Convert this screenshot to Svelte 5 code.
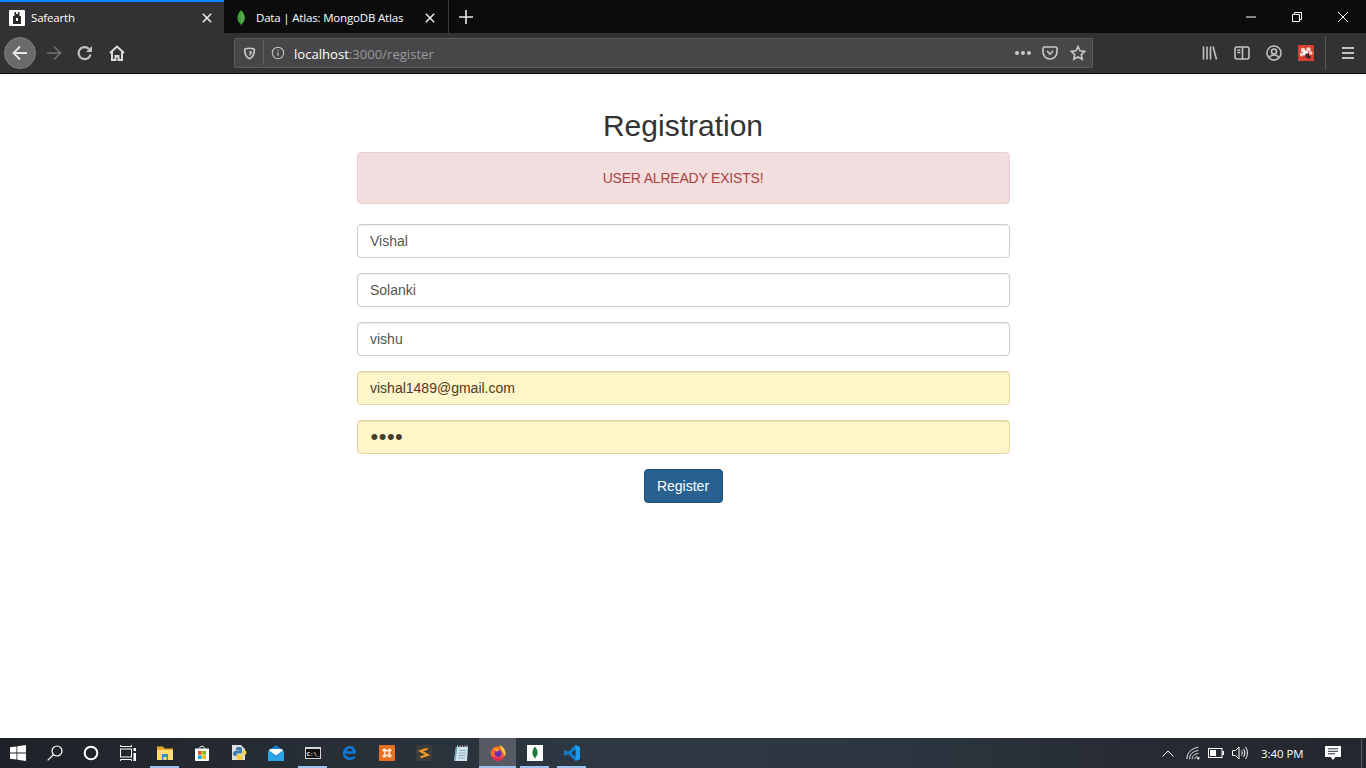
<script>
	let fields = [
		{ value: 'Vishal', type: 'text' },
		{ value: 'Solanki', type: 'text' },
		{ value: 'vishu', type: 'text' },
		{ value: 'vishal1489@gmail.com', type: 'text', filled: true },
		{ value: 'abcd', type: 'password', filled: true }
	];
</script>

<div class="screen">
	<!-- Tabs -->
	<header class="tabstrip">
		<div class="tab active">
			<svg class="favicon" viewBox="0 0 16 16">
				<rect width="16" height="16" rx="1" fill="#fff" />
				<path d="M5.500 2h1.500v2h2V2h1.500v4h1.500v8H4V6h1.500z" fill="#2a2a2a" />
				<rect x="7" y="8" width="2" height="3" fill="#fff" />
			</svg>
			<span class="tab-title">Safearth</span>
			<svg class="tab-close" viewBox="0 0 12 12"><path d="M1 1l10 10M11 1L1 11" /></svg>
		</div>
		<div class="tab">
			<svg class="favicon" viewBox="0 0 16 16">
				<path d="M8 0c2 2.400 3.600 4.800 3.600 8 0 3-1.700 5-3.100 6l-.5 2-.5-2C6.100 13 4.400 11 4.400 8 4.400 4.800 6 2.400 8 0z" fill="#3fa037" />
				<path d="M8 1v15c.4-.8.2-1.400.5-2 1.400-1 3.100-3 3.100-6C11.600 4.800 10 2.400 8 1z" fill="#58aa50" />
			</svg>
			<span class="tab-title">Data | Atlas: MongoDB Atlas</span>
			<svg class="tab-close" viewBox="0 0 12 12"><path d="M1 1l10 10M11 1L1 11" /></svg>
		</div>
		<div class="new-tab">
			<svg viewBox="0 0 14 14"><path d="M7 0v14M0 7h14" /></svg>
		</div>
		<div class="win-controls">
			<button aria-label="Minimize"><svg viewBox="0 0 10 10"><path d="M0 5h10" /></svg></button>
			<button aria-label="Restore"><svg viewBox="0 0 10 10"><path d="M.5 2.500h7v7h-7zM2.500 2.500V.5h7v7H7.500" /></svg></button>
			<button aria-label="Close"><svg viewBox="0 0 10 10"><path d="M0 0l10 10M10 0L0 10" /></svg></button>
		</div>
	</header>

	<!-- Toolbar -->
	<nav class="toolbar">
		<div class="back">
			<svg viewBox="0 0 16 16"><path d="M1 8h14M8 1.500L1.500 8 8 14.500" /></svg>
		</div>
		<div class="tool forward">
			<svg viewBox="0 0 16 16"><path d="M1 8h14M8 1.500L14.500 8 8 14.500" /></svg>
		</div>
		<div class="tool reload">
			<svg viewBox="0 0 16 16"><path d="M13.500 9.500A6 6 0 1 1 12 4" /><path class="solid" d="M15 1v6H9z" /></svg>
		</div>
		<div class="tool home">
			<svg viewBox="0 0 16 16"><path d="M1 8l7-6.500L15 8M3 6.500V15h3.500v-4h3v4H13V6.500" /></svg>
		</div>

		<div class="urlbar">
			<svg class="url-shield" viewBox="0 0 16 16">
				<path class="outline" d="M8 1.500c2 0 4 .5 6 1.300 0 6-1.800 9.700-6 11.700-4.200-2-6-5.700-6-11.700 2-.8 4-1.300 6-1.300z" />
				<path class="solid" d="M8 5c1 0 2 .2 2.800.5 0 2.600-1 4.300-2.800 5.500z" />
			</svg>
			<span class="url-sep"></span>
			<svg class="url-info" viewBox="0 0 16 16">
				<circle cx="8" cy="8" r="6.500" />
				<path d="M8 7v4.500M8 4.200v1.400" />
			</svg>
			<span class="url-text">localhost<span class="url-dim">:3000/register</span></span>
			<span class="url-dots"><i></i><i></i><i></i></span>
			<svg class="url-pocket" viewBox="0 0 16 16">
				<path d="M2.500 2h11A1.500 1.500 0 0 1 15 3.500V7a7 7 0 0 1-14 0V3.500A1.500 1.500 0 0 1 2.500 2z" />
				<path d="M5 6l3 3 3-3" />
			</svg>
			<svg class="url-star" viewBox="0 0 16 16">
				<path d="M8 1.500l2 4.300 4.700.6-3.400 3.200.9 4.700L8 12l-4.200 2.300.9-4.700L1.300 6.400 6 5.800z" />
			</svg>
		</div>

		<div class="tool-group">
			<div class="tool">
				<svg viewBox="0 0 16 16"><path d="M1.500 1.500v13M5 1.500v13M8.500 1.500v13M11 1.500l3.500 13" /></svg>
			</div>
			<div class="tool">
				<svg viewBox="0 0 16 16"><rect x="1" y="2" width="14" height="12" rx="2" /><path d="M8.500 2v12M3.300 5h3M3.300 7.500h3" /></svg>
			</div>
			<div class="tool">
				<svg viewBox="0 0 16 16"><circle cx="8" cy="8" r="7" /><circle cx="8" cy="6.500" r="2.500" /><path d="M3.500 12.500C4.500 10.500 6 10 8 10s3.500.5 4.500 2.500" /></svg>
			</div>
			<div class="tool ext">
				<svg viewBox="0 0 16 16">
					<rect width="16" height="16" fill="#d8412f" />
					<circle cx="5" cy="5" r="2.200" fill="#f6d8d3" />
					<circle cx="10.500" cy="4.500" r="2.200" fill="#f6d8d3" />
					<circle cx="3.800" cy="9.500" r="2" fill="#f6d8d3" />
					<circle cx="12.800" cy="8" r="1.800" fill="#f6d8d3" />
					<circle cx="7.500" cy="8" r="2.500" fill="#fff" />
					<path d="M7.500 8.500h3.500v2.500h1.500v2.500H9.500v-1H7.500z" fill="#3a2020" />
				</svg>
			</div>
		</div>
		<span class="tool-sep"></span>
		<div class="tool menu">
			<svg viewBox="0 0 14 14"><path d="M1 2h12M1 7h12M1 12h12" /></svg>
		</div>
	</nav>

	<!-- Page -->
	<main class="page">
		<div class="container">
			<h2>Registration</h2>
			<div class="alert">USER ALREADY EXISTS!</div>
			<form>
				{#each fields as field}
					<div class="form-group">
						<input class:filled={field.filled} class:dots={field.type === 'password'} type={field.type} value={field.value} readonly />
					</div>
				{/each}
				<div class="actions">
					<button type="button" class="btn">Register</button>
				</div>
			</form>
		</div>
	</main>

	<!-- Taskbar -->
	<footer class="taskbar">
		<div class="task w36">
			<svg viewBox="0 0 16 16"><path class="win" d="M0 2.300l6.500-.9v6.200H0zM7.300 1.300L16 0v7.600H7.300zM0 8.400h6.500v6.200L0 13.700zM7.300 8.400H16V16l-8.700-1.300z" /></svg>
		</div>
		<div class="task">
			<svg viewBox="0 0 16 16"><circle class="line" cx="10" cy="6" r="5" /><path class="line" d="M6.500 9.500L.7 15.300" /></svg>
		</div>
		<div class="task w36">
			<svg viewBox="0 0 16 16"><circle class="ring" cx="8" cy="8" r="6.300" /></svg>
		</div>
		<div class="task">
			<svg viewBox="0 0 16 16"><path class="thin" d="M.5 0v1.500h11V0M.5 16v-1.500h11V16" /><rect class="thin" x=".5" y="4" width="11" height="8" /><path class="win" d="M13.500 3H16v3h-2.500zM13.500 8H16v8h-2.500z" /></svg>
		</div>

		<div class="task on">
			<svg viewBox="0 0 16 16">
				<path d="M0 1.500h6l1.500 2H16V15H0z" fill="#e9a825" />
				<path d="M0 5h16v10H0z" fill="#ffdc74" />
				<path d="M5 9h6v6H9.500v-3h-3v3H5z" fill="#2a8fd6" />
			</svg>
		</div>
		<div class="task">
			<svg viewBox="0 0 16 16">
				<path class="thin" d="M5.500 3.500C5.500 .5 10.500 .5 10.500 3.500" />
				<path d="M1 3.500h14V15a1 1 0 0 1-1 1H2a1 1 0 0 1-1-1z" fill="#fff" />
				<rect x="4" y="6" width="3.700" height="3.700" fill="#f25022" />
				<rect x="8.300" y="6" width="3.700" height="3.700" fill="#7fba00" />
				<rect x="4" y="10.300" width="3.700" height="3.700" fill="#00a4ef" />
				<rect x="8.300" y="10.300" width="3.700" height="3.700" fill="#ffb900" />
			</svg>
		</div>
		<div class="task">
			<svg viewBox="0 0 16 16">
				<path d="M1 0h9l4 4v11H1z" fill="#dfe1e3" />
				<path d="M5 6V3.500C5 2.500 6 2 8 2s3 .5 3 1.500V7c0 1-1 1.500-2 1.500H7C6 8.500 5.500 9 5.500 10v1H4c-1.500 0-2-1-2-2.500S3 6 4 6h4V5.200H7" fill="#3f7cae" />
				<path d="M11.500 6V5h1.500c1.500 0 2.500 1 2.500 2.500S15 10 13.500 10H9.500v.8H12V13c0 1-1.500 2-3.500 2S5.500 14 5.500 13v-2c0-1 .8-1.500 1.800-1.500h2.700c1 0 1.500-.5 1.500-1.500z" fill="#f3cd4a" />
			</svg>
		</div>
		<div class="task">
			<svg viewBox="0 0 16 16">
				<path d="M0 6l8-6 8 6v10H0z" fill="#0f7fc9" />
				<path d="M1.500 6V4h13v2L8 10.500z" fill="#fff" />
				<path d="M0 6l8 5.500L16 6v10H0z" fill="#2aa6e8" />
			</svg>
		</div>
		<div class="task on">
			<svg class="cmd" viewBox="0 0 16 12">
				<rect width="16" height="12" fill="#d6d6d6" />
				<rect x="1" y="2" width="14" height="9" fill="#111" />
				<text x="1.800" y="8.800">C:\_</text>
			</svg>
		</div>
		<div class="task">
			<svg viewBox="0 0 16 16"><path d="M2.800 8.700h11.200C14.200 4 11.500 1 7.800 1 4 1 1 4.200 1 8.500c0 4.300 3 6.500 6.500 6.500 2.200 0 4.100-.7 5.500-1.700v-2.600c-1.500 1-3.100 1.600-4.700 1.600-2.700 0-4.600-1.300-5.500-3.600zM5 6.200C5.300 4.700 6.300 3.600 7.800 3.600s2.500 1.100 2.700 2.600z" fill="#0f78d4" fill-rule="evenodd" /></svg>
		</div>
		<div class="task">
			<svg viewBox="0 0 16 16">
				<rect width="16" height="16" rx="1" fill="#e8701f" />
				<path d="M5 3.500h1.500l1 1.500h1l1-1.500H11A1.500 1.500 0 0 1 12.500 5v1l-1.500 1v2l1.500 1v1a1.500 1.500 0 0 1-1.500 1.500H9.500l-1-1.500h-1l-1 1.500H5A1.500 1.500 0 0 1 3.500 11v-1L5 9V7L3.500 6V5A1.500 1.500 0 0 1 5 3.500z" fill="#fde3cd" />
				<rect x="6.500" y="6.500" width="3" height="3" fill="#e8701f" />
			</svg>
		</div>
		<div class="task">
			<svg viewBox="0 0 16 16">
				<rect width="16" height="16" rx="1" fill="#3c3c3c" />
				<path d="M11.500 3.800L4.500 6l7 4-7 2.200" stroke="#f59a23" stroke-width="2.200" />
			</svg>
		</div>
		<div class="task">
			<svg viewBox="0 0 16 16">
				<path d="M3 2h12l-1 14H1z" fill="#cfe6ee" />
				<path d="M3 2L1 16h1.500L4.500 2z" fill="#6fa9b8" />
				<path d="M6 5.500h7M5.700 8h7M5.500 10.500h7M5.200 13h7" stroke="#7f9fa8" stroke-width=".8" />
				<path d="M4.500 2V.5M7 2V.5M9.500 2V.5M12 2V.5M14 2V.5" stroke="#d8d8d8" stroke-width="1" />
			</svg>
		</div>
		<div class="task open">
			<svg viewBox="0 0 16 16">
				<circle cx="8" cy="8.500" r="7.300" fill="#ff6a2b" />
				<path d="M9.500 0c3.500 1.500 6 4.500 6 8.500 0 1-.2 2-.5 3-.5-2-1.500-4-3-5.500C11 4 10 2 9.500 0z" fill="#ffcb3d" />
				<path d="M1 10.500c1 3 4 5.300 7 5.300 3.300 0 6-2.300 6.800-5.300-2 2.500-8.500 3.500-13.800 0z" fill="#e3245a" />
				<circle cx="8.200" cy="8.500" r="3.500" fill="#6b2bb5" />
				<path d="M4 4c2-1 4-.5 5.500 1L6.500 6.800z" fill="#ffa436" />
			</svg>
		</div>
		<div class="task on">
			<svg viewBox="0 0 16 16">
				<rect width="16" height="16" fill="#fff" />
				<path d="M8 1.500c1.600 2 2.600 4 2.600 6.300 0 2.300-1.200 4-2.200 4.900L8 14.500l-.4-1.800c-1-.9-2.200-2.600-2.200-4.900C5.400 5.500 6.400 3.500 8 1.500z" fill="#15803d" />
			</svg>
		</div>
		<div class="task on">
			<svg viewBox="0 0 16 16">
				<path d="M11.500 0L16 2v12l-4.500 2L4 9l-2.500 2L0 10V6l1.500-1L4 7z" fill="#0e7ccb" />
				<path d="M11.500 0L16 2v12l-4.500 2z" fill="#1f9cf0" />
				<path d="M11.500 4.500L7.500 8l4 3.500z" fill="#2c2f36" />
			</svg>
		</div>

		<div class="tray">
			<svg class="t-chevron" viewBox="0 0 12 7"><path d="M.5 6.500L6 1l5.500 5.500" /></svg>
			<svg class="t-wifi" viewBox="0 0 16 16"><path d="M1 15C1 8 6 2.500 14 1.500M4 15c0-5 3.500-9 10-10M7 15c0-3 2-5.500 7-6.500M10 15c0-1.500 1-2.500 3-3" /><circle class="dot" cx="14" cy="14" r="1.400" /></svg>
			<svg class="t-battery" viewBox="0 0 16 10"><rect x=".5" y=".5" width="13.500" height="9" /><rect class="dot" x="2" y="2" width="6" height="6" /><rect class="dot" x="14.500" y="3" width="1.500" height="4" /></svg>
			<svg class="t-volume" viewBox="0 0 16 16"><path d="M.5 5.500h3L7 2v12l-3.500-3.500h-3zM9.500 5.500c1 1.500 1 3.500 0 5M11.500 4c1.700 2.500 1.700 5.500 0 8M13.500 2c2.500 3.500 2.500 8.500 0 12" /></svg>
			<span class="clock">3:40 PM</span>
			<svg class="t-note" viewBox="0 0 16 16"><path class="dot" d="M0 1h16v11h-5.500L8 15l-2.500-3H0z" /><path class="gap" d="M3 3.800h10M3 6.300h10M3 8.800h7" /></svg>
			<span class="show-desktop"></span>
		</div>
	</footer>
</div>

<style>
	:global(body) {
		margin: 0;
		background: #fff;
	}
	.screen {
		width: 1366px;
		height: 768px;
		display: flex;
		flex-direction: column;
		overflow: hidden;
		font-family: "Open Sans", "Noto Sans", sans-serif;
	}
	svg {
		display: block;
		fill: none;
	}

	/* Tabs */
	.tabstrip {
		height: 33px;
		flex: none;
		display: flex;
		background: #0c0c0d;
	}
	.tab {
		width: 225px;
		box-sizing: border-box;
		display: flex;
		align-items: center;
		padding: 2px 10px 0 9px;
		color: #fff;
	}
	.tab + .tab {
		border-right: 1px solid #3a3a3c;
		height: 33px;
	}
	.tab.active {
		width: 224px;
		background: #323234;
		border-top: 2px solid #0a84ff;
		padding-top: 0;
	}
	.favicon {
		width: 16px;
		height: 16px;
		margin-right: 6px;
		flex: none;
	}
	.tab + .tab .favicon {
		margin-right: 7px;
	}
	.tab-title {
		flex: 1;
		font-size: 11.5px;
		letter-spacing: -0.18px;
		white-space: nowrap;
	}
	.tab-close {
		width: 10px;
		height: 10px;
		margin-right: 2px;
		flex: none;
	}
	.tab + .tab .tab-close {
		margin-right: 3px;
	}
	.tab-close path {
		stroke: #f0f0f0;
		stroke-width: 1.8;
	}
	.new-tab {
		width: 34px;
		display: flex;
		align-items: center;
		justify-content: center;
	}
	.new-tab svg {
		width: 14px;
		height: 14px;
	}
	.new-tab path {
		stroke: #e8e8e8;
		stroke-width: 1.6;
	}
	.win-controls {
		margin-left: auto;
		display: flex;
	}
	.win-controls button {
		width: 46px;
		padding: 0;
		border: 0;
		background: none;
		display: flex;
		align-items: center;
		justify-content: center;
	}
	.win-controls svg {
		width: 10px;
		height: 10px;
	}
	.win-controls path {
		stroke: #fff;
		stroke-width: 1;
	}

	/* Toolbar */
	.toolbar {
		height: 40px;
		flex: none;
		display: flex;
		align-items: center;
		padding-left: 4px;
		background: #323234;
		border-bottom: 1px solid #0c0c0d;
	}
	.back {
		width: 32px;
		height: 32px;
		border-radius: 50%;
		background: #6a6a6c;
		border: 1px solid #7a7a7c;
		box-sizing: border-box;
		display: flex;
		align-items: center;
		justify-content: center;
	}
	.back svg {
		width: 16px;
		height: 16px;
	}
	.back path {
		stroke: #e6e6e6;
		stroke-width: 1.8;
	}
	.tool {
		width: 32px;
		height: 32px;
		flex: none;
		display: flex;
		align-items: center;
		justify-content: center;
	}
	.tool svg {
		width: 16px;
		height: 16px;
	}
	.tool path,
	.tool rect,
	.tool circle {
		stroke: #c2c2c4;
		stroke-width: 1.6;
	}
	.tool .solid {
		fill: #c2c2c4;
		stroke: none;
	}
	.forward {
		margin-left: 2px;
	}
	.forward path {
		stroke: #727274;
	}
	.reload {
		margin-left: -1px;
	}
	.reload path {
		stroke-width: 2.2;
	}
	.home {
		margin-right: 101px;
	}
	.home path {
		stroke: #dcdcdd;
		stroke-width: 2;
	}
	.ext rect,
	.ext circle,
	.ext path {
		stroke: none;
	}
	.urlbar {
		width: 859px;
		height: 30px;
		flex: none;
		box-sizing: border-box;
		display: flex;
		align-items: center;
		background: #474749;
		border: 1px solid #5c5c5e;
		border-radius: 2px;
		padding: 0 6px 0 8px;
		color: #fff;
	}
	.urlbar svg {
		flex: none;
	}
	.url-shield {
		width: 13px;
		height: 13px;
		margin-right: 1px;
	}
	.url-shield .outline {
		stroke: #c9c9ca;
		stroke-width: 2;
	}
	.url-shield .solid {
		fill: #c9c9ca;
	}
	.url-sep {
		width: 1px;
		height: 24px;
		margin: 0 7px 0 6px;
		background: #636365;
	}
	.url-info {
		width: 14px;
		height: 14px;
	}
	.url-info circle,
	.url-info path {
		stroke: #c9c9ca;
		stroke-width: 1.2;
	}
	.url-text {
		flex: 1;
		margin-left: 9px;
		padding-top: 1px;
		font-size: 13.1px;
		white-space: nowrap;
	}
	.url-dim {
		color: #9a9a9c;
	}
	.url-dots {
		display: flex;
		gap: 2px;
		margin-right: 11px;
	}
	.url-dots i {
		width: 4px;
		height: 4px;
		border-radius: 50%;
		background: #c9c9ca;
	}
	.url-pocket,
	.url-star {
		width: 16px;
		height: 16px;
	}
	.url-pocket {
		margin-right: 12px;
	}
	.url-pocket path,
	.url-star path {
		stroke: #c9c9ca;
		stroke-width: 1.6;
	}
	.tool-group {
		display: flex;
		margin-left: 101px;
	}
	.tool-sep {
		width: 1px;
		height: 34px;
		margin-left: 3px;
		background: #5a5a5c;
	}
	.menu {
		width: 14px;
		margin-left: 15px;
	}
	.menu svg {
		width: 14px;
		height: 14px;
	}
	.menu path {
		stroke-width: 2;
	}

	/* Page */
	.page {
		flex: 1;
		padding-top: 35px;
		background: #fff;
		font-family: "Liberation Sans", Arial, sans-serif;
		font-size: 14px;
		line-height: 20px;
		color: #333;
	}
	.container {
		width: 653px;
		margin: 0 auto;
	}
	h2 {
		margin: 0 0 10px;
		font-size: 30px;
		font-weight: 500;
		line-height: 33px;
		text-align: center;
		color: #333;
	}
	.alert {
		padding: 15px;
		margin-bottom: 20px;
		background: #f2dede;
		border: 1px solid #ebccd1;
		border-radius: 4px;
		color: #a94442;
		letter-spacing: -0.2px;
		text-align: center;
	}
	.form-group {
		margin-bottom: 15px;
	}
	input {
		display: block;
		width: 100%;
		height: 34px;
		box-sizing: border-box;
		padding: 6px 12.5px;
		font: inherit;
		color: #555;
		background: #fff;
		border: 1px solid #ccc;
		border-radius: 4px;
		outline: none;
		box-shadow: inset 0 1px 1px rgba(0, 0, 0, 0.075);
	}
	input.filled {
		background: #fef6c8;
		border-color: #e8d2a0;
		color: #4a3c2a;
	}
	input.dots {
		font-size: 22px;
		letter-spacing: 0.5px;
		padding-left: 13px;
	}
	.actions {
		text-align: center;
	}
	.btn {
		width: 79px;
		height: 34px;
		padding: 6px 0;
		font: inherit;
		color: #fff;
		background: #286090;
		border: 1px solid #204d74;
		border-radius: 4px;
	}

	/* Taskbar */
	.taskbar {
		height: 30px;
		flex: none;
		display: flex;
		background: linear-gradient(90deg, #1e2228 0%, #262c33 20%, #2e3944 45%, #2c3640 65%, #262a32 85%, #24272e 100%);
	}
	.task {
		position: relative;
		width: 37px;
		flex: none;
		box-sizing: border-box;
		display: flex;
		align-items: center;
		justify-content: center;
		padding-bottom: 1px;
	}
	.task.w36 {
		width: 36px;
	}
	.task svg {
		width: 16px;
		height: 16px;
	}
	.task.on::after,
	.task.open::after {
		content: '';
		position: absolute;
		left: 4px;
		right: 4px;
		bottom: 0;
		height: 2px;
		background: #9cc3ef;
	}
	.task.open {
		background: #565b63;
	}
	.task.open::after {
		left: 0;
		right: 0;
	}
	.win {
		fill: #fff;
	}
	.line {
		stroke: #fff;
		stroke-width: 1.2;
	}
	.ring {
		stroke: #fff;
		stroke-width: 2;
	}
	.thin {
		stroke: #fff;
		stroke-width: 1;
	}
	.task .cmd {
		height: 12px;
	}
	.cmd text {
		font-family: "Liberation Mono", monospace;
		font-size: 5.5px;
		font-weight: 700;
		fill: #fff;
	}
	.tray {
		margin-left: auto;
		display: flex;
		align-items: center;
		color: #fff;
	}
	.tray path,
	.tray rect {
		stroke: #fff;
		stroke-width: 1;
	}
	.tray .dot {
		fill: #fff;
		stroke: none;
	}
	.t-chevron {
		width: 12px;
		height: 7px;
	}
	.t-wifi {
		width: 14px;
		height: 14px;
		margin-left: 12px;
	}
	.t-battery {
		width: 16px;
		height: 10px;
		margin-left: 8px;
	}
	.t-volume {
		width: 16px;
		height: 16px;
		margin-left: 8px;
	}
	.clock {
		width: 46px;
		margin-left: 13px;
		font-size: 11.4px;
		white-space: nowrap;
	}
	.t-note {
		width: 16px;
		height: 16px;
		margin-left: 18px;
	}
	.tray .t-note .gap {
		stroke: #2a2e35;
	}
	.show-desktop {
		width: 1px;
		height: 30px;
		margin: 0 4px 0 20px;
		background: #555a62;
	}
</style>
